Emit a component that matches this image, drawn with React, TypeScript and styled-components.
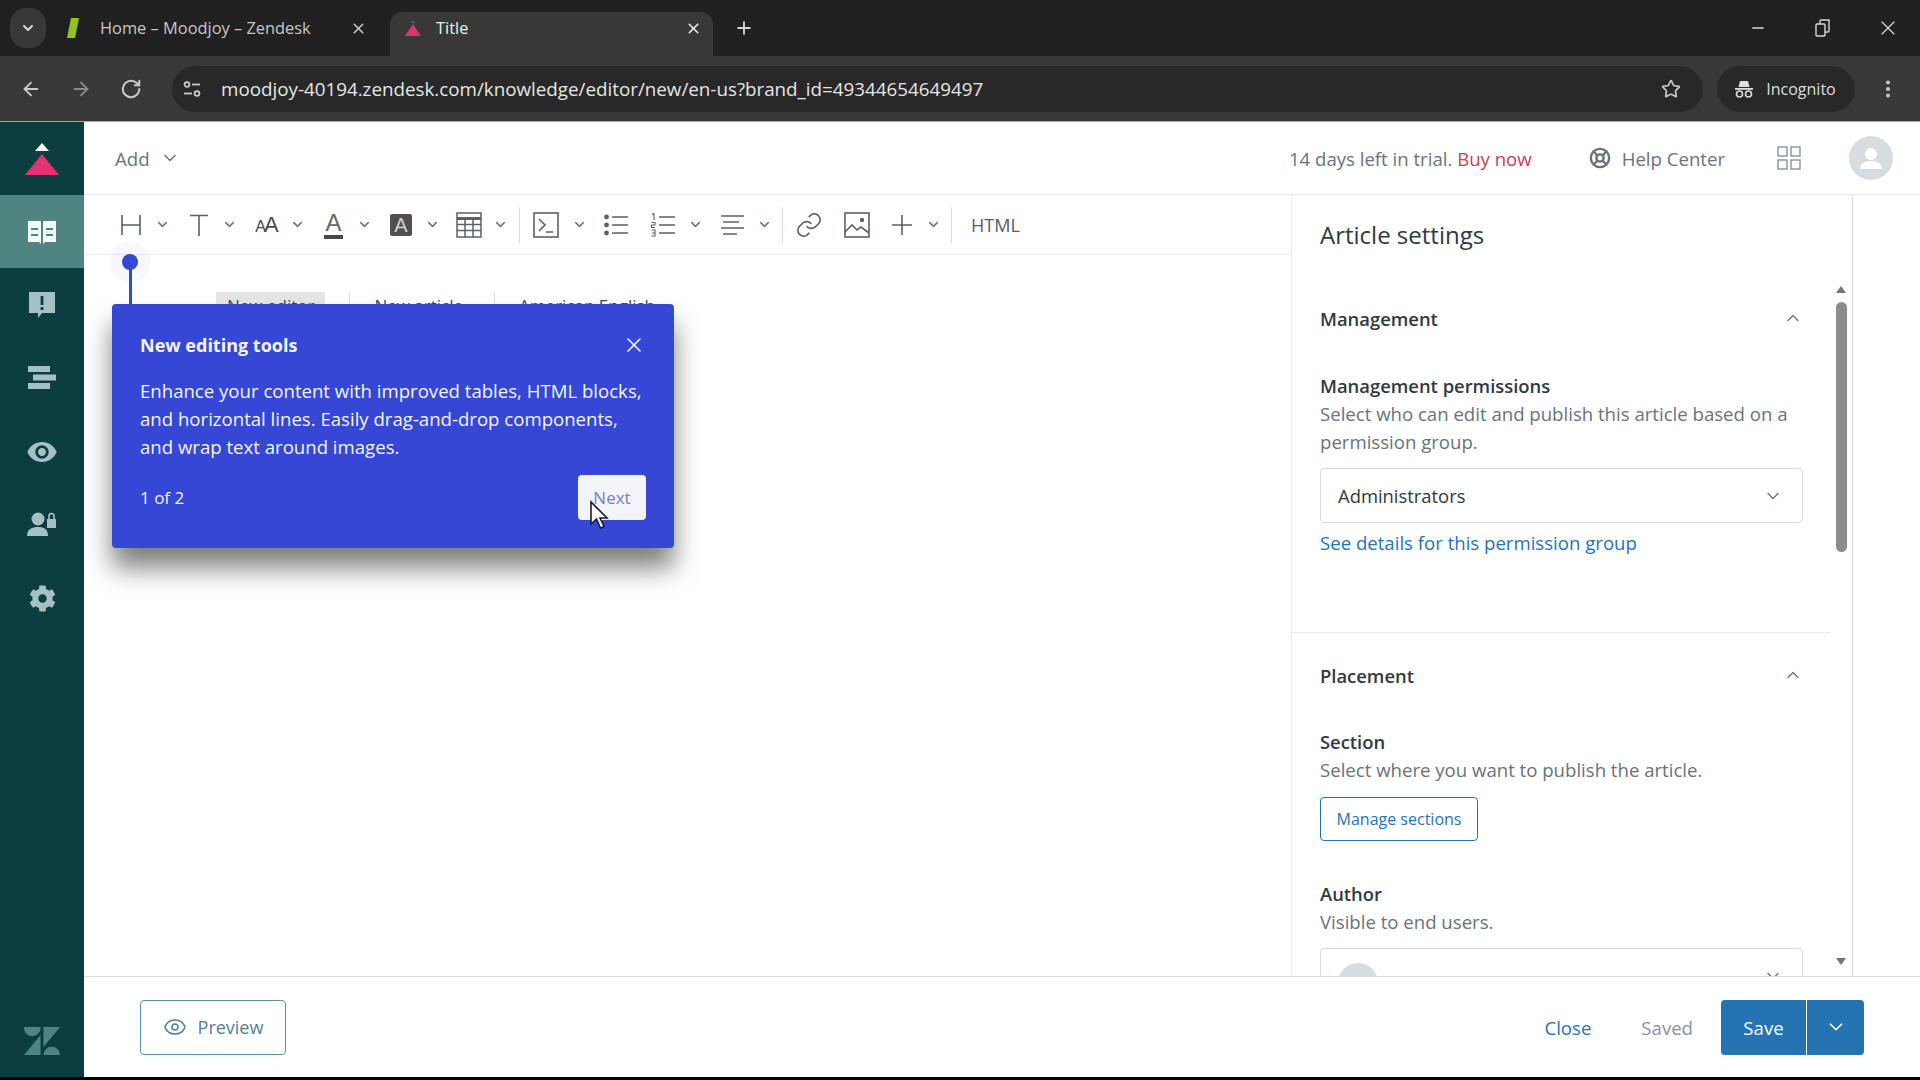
import React from "react";
import styled, { createGlobalStyle } from "styled-components";
import {
  ArrowLeft,
  ArrowRight,
  ChevronDown,
  ChevronUp,
  Eye,
  LifeBuoy,
  Minus,
  MoreVertical,
  Plus,
  RotateCw,
  Star,
  X,
} from "lucide-react";
import { FaCog } from "react-icons/fa";
import { MdVisibility } from "react-icons/md";

const GlobalStyle = createGlobalStyle`
  html, body {
    margin: 0;
    padding: 0;
    background: #000;
    font-family: "Open Sans", "Noto Sans", sans-serif;
  }
  * {
    box-sizing: border-box;
  }
`;

const Screen = styled.div`
  width: 1920px;
  height: 1080px;
  overflow: hidden;
  display: flex;
  flex-direction: column;
  background: #000;
`;

/* browser chrome */

const TabStrip = styled.div`
  height: 56px;
  display: flex;
  align-items: flex-end;
  padding-left: 10px;
  background: #202020;
  color: #d8d8d8;
`;

const TabMenu = styled.div`
  width: 36px;
  height: 40px;
  margin-bottom: 8px;
  border-radius: 16px;
  background: #383838;
  display: flex;
  align-items: center;
  justify-content: center;
`;

const Tab = styled.div<{ $active?: boolean }>`
  width: ${(p) => (p.$active ? "323px" : "344px")};
  height: 44px;
  display: flex;
  align-items: center;
  gap: ${(p) => (p.$active ? "14px" : "20px")};
  padding: ${(p) => (p.$active ? "0 11px 12px 14px" : "0 23px 12px 20px")};
  border-radius: 12px 12px 0 0;
  background: ${(p) => (p.$active ? "#383838" : "transparent")};
  color: ${(p) => (p.$active ? "#eee" : "#c8c8c8")};
`;

const TabTitle = styled.span`
  flex: 1;
  font-size: 16.4px;
  line-height: 24px;
  white-space: nowrap;
`;

const NewTab = styled.div`
  margin: 0 0 16px 21px;
  height: 24px;
  display: flex;
  align-items: center;
`;

const WindowControls = styled.div`
  margin-left: auto;
  align-self: flex-start;
  display: flex;
`;

const WindowButton = styled.div`
  width: 65px;
  height: 56px;
  display: flex;
  align-items: center;
  justify-content: center;
`;

const NavBar = styled.div`
  height: 66px;
  display: flex;
  align-items: center;
  gap: 14px;
  padding: 0 21px 0 20px;
  background: #383838;
  border-bottom: 1px solid #a8a8a8;
  color: #c9c9c9;
`;

const NavIcons = styled.div`
  display: flex;
  align-items: center;
  gap: 28px;
  margin-right: 16px;
`;

const AddressPill = styled.div`
  width: 1535px;
  height: 46px;
  display: flex;
  align-items: center;
  padding: 0 22px 0 11px;
  border-radius: 23px;
  background: #282828;
`;

const SiteChip = styled.div`
  width: 18px;
  margin-right: 20px;
  display: flex;
  justify-content: center;
`;

const Url = styled.span`
  flex: 1;
  font-size: 18.8px;
  color: #e6e6e6;
  white-space: nowrap;
`;

const IncognitoPill = styled.div`
  width: 138px;
  height: 46px;
  display: flex;
  align-items: center;
  gap: 12px;
  padding-left: 17px;
  border-radius: 23px;
  background: #282828;
  font-size: 16px;
  color: #dedede;
`;

const MoreDots = styled.div`
  margin-left: 8px;
  display: flex;
`;

/* app */

const AppBody = styled.div`
  flex: 1;
  min-height: 0;
  display: flex;
  background: #fff;
`;

const Sidebar = styled.nav`
  width: 84px;
  display: flex;
  flex-direction: column;
  background: #0c3e40;
  color: #a6c1c3;
`;

const SideLogo = styled.div`
  height: 73px;
  display: flex;
  align-items: center;
  justify-content: center;
`;

const SideItem = styled.div<{ $active?: boolean }>`
  height: 73.3px;
  display: flex;
  align-items: center;
  justify-content: center;
  background: ${(p) => (p.$active ? "#4f8480" : "transparent")};
  color: ${(p) => (p.$active ? "#f2fafa" : "inherit")};
`;

const SideFooter = styled.div`
  margin-top: auto;
  padding-bottom: 22px;
  display: flex;
  justify-content: center;
  color: #4f8480;
`;

const Main = styled.div`
  flex: 1;
  min-width: 0;
  display: flex;
  flex-direction: column;
`;

const Header = styled.header`
  height: 73px;
  display: flex;
  align-items: center;
  padding: 0 27px 0 31px;
  border-bottom: 1px solid #e9ebed;
  color: #68737d;
  font-size: 18.6px;
`;

const AddMenu = styled.div`
  display: flex;
  align-items: center;
  gap: 10px;
`;

const Trial = styled.div`
  margin-left: auto;
`;

const BuyNow = styled.span`
  color: #c8405a;
`;

const HelpCenter = styled.div`
  margin-left: 57px;
  display: flex;
  align-items: center;
  gap: 11px;
`;

const AppsButton = styled.div`
  margin-left: 52px;
  display: flex;
  color: #87929d;
`;

const UserAvatar = styled.div`
  margin-left: 48px;
  width: 44px;
  height: 44px;
  border-radius: 50%;
  background: #d8dcde;
  color: #fff;
  overflow: hidden;
  display: flex;
`;

const Content = styled.div`
  flex: 1;
  min-height: 0;
  display: flex;
`;

const Editor = styled.section`
  position: relative;
  width: 1207px;
  display: flex;
  flex-direction: column;
`;

const EditorToolbar = styled.div`
  height: 60px;
  display: flex;
  align-items: center;
  padding-left: 29px;
  border-bottom: 1px solid #e9ebed;
  color: #5a6168;
`;

const ToolGroup = styled.div<{ $after?: number; $gap?: number }>`
  display: flex;
  align-items: center;
  gap: ${(p) => p.$gap ?? 0}px;
  margin-right: ${(p) => p.$after ?? 5.5}px;
`;

const ToolIcon = styled.div<{ $wide?: number }>`
  width: ${(p) => p.$wide ?? 36}px;
  height: 36px;
  display: flex;
  align-items: center;
  justify-content: center;
`;

const ToolCaret = styled.div`
  width: 26px;
  display: flex;
  justify-content: center;
  color: #68737d;
`;

const ToolDivider = styled.div`
  width: 1px;
  height: 36px;
  margin: 0 8px 0 5px;
  background: #d8dcde;
`;

const SmallCaps = styled.span`
  font-family: "Liberation Sans", sans-serif;
  font-size: 22px;
  letter-spacing: -2px;
  line-height: 1;
  color: #4a4a4a;
  & > small {
    font-size: 16px;
  }
`;

const ColorLetter = styled.span`
  font-family: "Liberation Sans", sans-serif;
  font-size: 24px;
  line-height: 24px;
  font-weight: 400;
  color: #686868;
  border-bottom: 4px solid #4a4a4a;
  padding: 0 1px;
`;

const FillLetter = styled.span`
  width: 22px;
  height: 22px;
  border-radius: 2px;
  background: #505050;
  color: #d0d0d0;
  font-family: "Liberation Sans", sans-serif;
  font-size: 20px;
  line-height: 22px;
  text-align: center;
`;

const HtmlButton = styled.div`
  margin-left: 11px;
  font-size: 18px;
  color: #555c63;
`;

const MetaRow = styled.div`
  margin: 37px 0 0 132px;
  display: flex;
  align-items: center;
  height: 24px;
  font-size: 17px;
  line-height: 20px;
  color: #3e4a52;
`;

const MetaItem = styled.div<{ $filled?: boolean }>`
  height: 24px;
  padding: ${(p) => (p.$filled ? "4px 11px 0" : "4px 7px 0 0")};
  background: ${(p) => (p.$filled ? "#e6e6e6" : "transparent")};
  white-space: nowrap;
`;

const MetaDivider = styled.div`
  width: 1px;
  height: 24px;
  margin: 0 24px;
  background: #d8dcde;
`;

/* tour popover, sits over the editor */

const Beacon = styled.div`
  position: absolute;
  left: 38px;
  top: 59px;
  width: 16px;
  height: 16px;
  border-radius: 50%;
  background: #3547d4;
  box-shadow: 0 0 0 12px rgba(53, 71, 212, 0.04);
  &::after {
    content: "";
    position: absolute;
    left: 7px;
    top: 14px;
    width: 2.5px;
    height: 40px;
    background: #3547d4;
  }
`;

const Popover = styled.div`
  position: absolute;
  left: 28px;
  top: 109px;
  width: 562px;
  height: 244px;
  padding: 27px 28px 0;
  border-radius: 4px;
  background: #3547d4;
  color: #f4f5fc;
  box-shadow: 0 20px 26px rgba(0, 0, 0, 0.5);
`;

const PopoverHead = styled.div`
  display: flex;
  align-items: center;
  justify-content: space-between;
  height: 28px;
  font-size: 18px;
  font-weight: 700;
`;

const PopoverText = styled.p`
  margin: 18px 0 0;
  font-size: 18.6px;
  line-height: 28px;
  white-space: nowrap;
`;

const PopoverFoot = styled.div`
  margin-top: 14px;
  display: flex;
  align-items: center;
  justify-content: space-between;
  font-size: 17px;
`;

const NextButton = styled.div`
  width: 68px;
  height: 45px;
  border-radius: 4px;
  background: #f3f4f8;
  color: #7c7fc0;
  font-size: 17px;
  display: flex;
  align-items: center;
  justify-content: center;
`;

const Cursor = styled.svg`
  position: absolute;
  left: 505px;
  top: 305px;
`;

/* settings panel */

const Panel = styled.aside`
  width: 562px;
  display: flex;
  flex-direction: column;
  border-left: 1px solid #e9ebed;
  border-right: 1px solid #d8dcde;
  overflow: hidden;
`;

const PanelTitle = styled.h2`
  margin: 0;
  padding: 24px 0 25px 28px;
  font-size: 24px;
  line-height: 32px;
  font-weight: 400;
  color: #2f3941;
`;

const PanelBody = styled.div`
  flex: 1;
  min-height: 0;
  display: flex;
`;

const PanelScroll = styled.div`
  width: 540px;
  overflow: hidden;
`;

const Settings = styled.div<{ $last?: boolean }>`
  padding: ${(p) => (p.$last ? "30px 0 0 28px" : "30px 0 75px 28px")};
  border-bottom: ${(p) => (p.$last ? "none" : "1px solid #e9ebed")};
`;

const SettingsHead = styled.div`
  width: 483px;
  height: 24px;
  display: flex;
  align-items: center;
  justify-content: space-between;
  font-size: 18.4px;
  font-weight: 600;
  color: #2f3941;
`;

const FieldLabel = styled.div<{ $gap?: number }>`
  margin-top: ${(p) => p.$gap ?? 41}px;
  font-size: 18.4px;
  line-height: 28px;
  font-weight: 600;
  color: #2f3941;
`;

const FieldHint = styled.div`
  width: 483px;
  font-size: 18.6px;
  line-height: 28px;
  color: #68737d;
`;

const SelectBox = styled.div`
  width: 483px;
  height: 55px;
  margin-top: 12px;
  padding: 0 19px 0 17px;
  display: flex;
  align-items: center;
  justify-content: space-between;
  border: 1px solid #d8dcde;
  border-radius: 4px;
  font-size: 18.4px;
  color: #2f3941;
`;

const SelectAvatar = styled.div`
  width: 40px;
  height: 40px;
  margin-top: 15px;
  border-radius: 50%;
  background: #d8dcde;
`;

const FieldLink = styled.div`
  margin-top: 6px;
  font-size: 18.6px;
  line-height: 28px;
  color: #1f73b7;
`;

const OutlineButton = styled.div`
  width: 158px;
  height: 44px;
  margin-top: 13px;
  display: flex;
  align-items: center;
  justify-content: center;
  border: 1.5px solid #1f73b7;
  border-radius: 4px;
  font-size: 16px;
  color: #1f73b7;
`;

const Scrollbar = styled.div`
  width: 22px;
  display: flex;
  flex-direction: column;
  align-items: center;
  padding-top: 10px;
`;

const ScrollThumb = styled.div`
  width: 11px;
  height: 250px;
  margin-top: 9px;
  border-radius: 6px;
  background: #8c8c8c;
`;

const ScrollArrow = styled.div<{ $down?: boolean }>`
  width: 0;
  height: 0;
  border-left: 5px solid transparent;
  border-right: 5px solid transparent;
  border-bottom: ${(p) => (p.$down ? "none" : "7px solid #757575")};
  border-top: ${(p) => (p.$down ? "7px solid #757575" : "none")};
  margin-top: ${(p) => (p.$down ? "406px" : "0")};
`;

/* footer */

const Footer = styled.footer`
  height: 101px;
  display: flex;
  align-items: center;
  padding: 0 56px;
  border-top: 1px solid #dfe2e5;
`;

const PreviewButton = styled.div`
  width: 146px;
  height: 55px;
  display: flex;
  align-items: center;
  justify-content: center;
  gap: 11px;
  border: 1.5px solid #5f8fa8;
  border-radius: 4px;
  font-size: 18px;
  color: #4f7f9a;
`;

const FooterActions = styled.div`
  margin-left: auto;
  display: flex;
  align-items: center;
  font-size: 18.6px;
`;

const CloseLink = styled.span`
  color: #1f73b7;
`;

const SavedLabel = styled.span`
  margin: 0 28px 0 50px;
  color: #87929d;
`;

const SplitButton = styled.div`
  height: 55px;
  display: flex;
  color: #fff;
`;

const SaveButton = styled.div`
  width: 85px;
  display: flex;
  align-items: center;
  justify-content: center;
  background: #2673b3;
  border-radius: 4px 0 0 4px;
`;

const SaveCaret = styled.div`
  width: 57px;
  margin-left: 1px;
  display: flex;
  align-items: center;
  justify-content: center;
  background: #2673b3;
  border-radius: 0 4px 4px 0;
`;

const BottomEdge = styled.div`
  height: 3px;
  background: #000;
`;

const Caret = () => <ChevronDown size={15} strokeWidth={2.4} />;

const Line = (props: React.SVGProps<SVGSVGElement>) => (
  <svg width="26" height="26" viewBox="0 0 26 26" fill="none" stroke="currentColor" strokeWidth="1.6" {...props} />
);

const App: React.FC = () => {
  return (
    <Screen>
      <GlobalStyle />
      <TabStrip>
        <TabMenu>
          <ChevronDown size={16} strokeWidth={3} />
        </TabMenu>
        <Tab>
          <svg width="14" height="22" viewBox="0 0 14 22">
            <path d="M5 1 L13 1 L9 21 L1 21 Z" fill="#8fc31f" />
          </svg>
          <TabTitle>Home – Moodjoy – Zendesk</TabTitle>
          <X size={17} strokeWidth={2.2} />
        </Tab>
        <Tab $active>
          <svg width="18" height="20" viewBox="0 0 18 20">
            <path d="M9 2 L11 5 L7 5 Z" fill="#2f7a70" />
            <path d="M9 6 L17 18 L1 18 Z" fill="#e0336f" />
          </svg>
          <TabTitle>Title</TabTitle>
          <X size={17} strokeWidth={2.2} />
        </Tab>
        <NewTab>
          <Plus size={20} strokeWidth={2.2} />
        </NewTab>
        <WindowControls>
          <WindowButton>
            <Minus size={18} strokeWidth={1.8} />
          </WindowButton>
          <WindowButton>
            <svg width="16" height="18" viewBox="0 0 16 18" fill="none" stroke="currentColor" strokeWidth="1.4">
              <rect x="1" y="5" width="9" height="12" rx="1" />
              <path d="M5 5 V2 a1 1 0 0 1 1 -1 h8 v11 a1 1 0 0 1 -1 1 h-3" />
            </svg>
          </WindowButton>
          <WindowButton>
            <X size={24} strokeWidth={1.3} />
          </WindowButton>
        </WindowControls>
      </TabStrip>

      <NavBar>
        <NavIcons>
          <ArrowLeft size={22} strokeWidth={2} />
          <ArrowRight size={22} strokeWidth={2} color="#8a8a8a" />
          <RotateCw size={22} strokeWidth={2.2} />
        </NavIcons>
        <AddressPill>
          <SiteChip>
            <svg width="18" height="18" viewBox="0 0 18 18" fill="none" stroke="currentColor" strokeWidth="1.8">
              <circle cx="4" cy="4.5" r="2.4" />
              <path d="M9 4.5 H17" />
              <path d="M1 13.5 H9" />
              <circle cx="14" cy="13.5" r="2.4" />
            </svg>
          </SiteChip>
          <Url>moodjoy-40194.zendesk.com/knowledge/editor/new/en-us?brand_id=49344654649497</Url>
          <Star size={20} strokeWidth={2} />
        </AddressPill>
        <IncognitoPill>
          <svg width="20" height="20" viewBox="0 0 20 20" fill="currentColor">
            <path d="M6 2 h8 l1.5 6 h-11 Z" />
            <rect x="1" y="9" width="18" height="1.8" />
            <circle cx="5.5" cy="15" r="3" fill="none" stroke="currentColor" strokeWidth="1.6" />
            <circle cx="14.5" cy="15" r="3" fill="none" stroke="currentColor" strokeWidth="1.6" />
          </svg>
          Incognito
        </IncognitoPill>
        <MoreDots>
          <MoreVertical size={22} strokeWidth={2.4} />
        </MoreDots>
      </NavBar>

      <AppBody>
        <Sidebar>
          <SideLogo>
            <svg width="36" height="32" viewBox="0 0 36 32">
              <path d="M18 0 L25 8 L11 8 Z" fill="#fff" />
              <path d="M18 11 L35 32 L1 32 Z" fill="#e0336f" />
            </svg>
          </SideLogo>
          <SideItem $active>
            <svg width="30" height="30" viewBox="0 0 30 30" fill="currentColor">
              <path d="M1 4 h12 a1 1 0 0 1 1 1 v22 l-2 -2 H1 Z M29 4 h-12 a1 1 0 0 0 -1 1 v22 l2 -2 h11 Z" />
              <path d="M4 11 h7 v2 H4 Z M4 17 h7 v2 H4 Z M19 11 h7 v2 h-7 Z M19 17 h7 v2 h-7 Z" fill="#4f8480" />
            </svg>
          </SideItem>
          <SideItem>
            <svg width="28" height="28" viewBox="0 0 28 28" fill="currentColor">
              <path d="M1 1 h26 v21 H14 l-4 5 v-5 H1 Z" />
              <path d="M12.6 5 h2.8 v9 h-2.8 Z M12.6 16 h2.8 v3 h-2.8 Z" fill="#0c3e40" />
            </svg>
          </SideItem>
          <SideItem>
            <svg width="28" height="24" viewBox="0 0 28 24" fill="currentColor">
              <rect x="0" y="0" width="22" height="6" />
              <rect x="5" y="8.5" width="23" height="6" />
              <rect x="0" y="17" width="22" height="6" />
            </svg>
          </SideItem>
          <SideItem>
            <MdVisibility size={32} />
          </SideItem>
          <SideItem>
            <svg width="30" height="28" viewBox="0 0 30 28" fill="currentColor">
              <circle cx="11" cy="8" r="6.5" />
              <path d="M0 25 c0 -7 5 -9 11 -9 s10 2 10 9 Z" />
              <path d="M20 8 h9 v9 h-9 Z" />
              <path d="M22 8 v-3 a2.5 2.5 0 0 1 5 0 v3" fill="none" stroke="currentColor" strokeWidth="1.6" />
            </svg>
          </SideItem>
          <SideItem>
            <FaCog size={27} />
          </SideItem>
          <SideFooter>
            <svg width="36" height="28" viewBox="0 0 36 28" fill="currentColor">
              <path d="M0 0 H16.5 V1 A8.2 8.2 0 0 1 0 1 Z" />
              <path d="M16.5 8 V28 H0 Z" />
              <path d="M19.5 0 H36 L19.5 20 Z" />
              <path d="M19.5 28 A8.2 8.2 0 0 1 36 28 Z" />
            </svg>
          </SideFooter>
        </Sidebar>

        <Main>
          <Header>
            <AddMenu>
              Add
              <ChevronDown size={20} strokeWidth={1.8} />
            </AddMenu>
            <Trial>
              14 days left in trial. <BuyNow>Buy now</BuyNow>
            </Trial>
            <HelpCenter>
              <LifeBuoy size={22} strokeWidth={2.6} />
              Help Center
            </HelpCenter>
            <AppsButton>
              <svg width="24" height="24" viewBox="0 0 24 24" fill="none" stroke="currentColor" strokeWidth="1.4">
                <rect x="1" y="1" width="9" height="9" />
                <rect x="14" y="1" width="9" height="9" />
                <rect x="1" y="14" width="9" height="9" />
                <rect x="14" y="14" width="9" height="9" />
              </svg>
            </AppsButton>
            <UserAvatar>
              <svg width="44" height="44" viewBox="0 0 44 44" fill="currentColor">
                <circle cx="22" cy="18" r="6" />
                <path d="M11 33 c0 -6 5 -8 11 -8 s11 2 11 8 Z" />
              </svg>
            </UserAvatar>
          </Header>

          <Content>
            <Editor>
              <EditorToolbar>
                <ToolGroup>
                  <ToolIcon>
                    <Line>
                      <path d="M4 3 V23 M22 3 V23 M4 13 H22" />
                    </Line>
                  </ToolIcon>
                  <ToolCaret><Caret /></ToolCaret>
                </ToolGroup>
                <ToolGroup>
                  <ToolIcon>
                    <Line>
                      <path d="M4 3.5 H22 M13 3.5 V24" />
                    </Line>
                  </ToolIcon>
                  <ToolCaret><Caret /></ToolCaret>
                </ToolGroup>
                <ToolGroup>
                  <ToolIcon>
                    <SmallCaps><small>A</small>A</SmallCaps>
                  </ToolIcon>
                  <ToolCaret><Caret /></ToolCaret>
                </ToolGroup>
                <ToolGroup>
                  <ToolIcon>
                    <ColorLetter>A</ColorLetter>
                  </ToolIcon>
                  <ToolCaret><Caret /></ToolCaret>
                </ToolGroup>
                <ToolGroup>
                  <ToolIcon>
                    <FillLetter>A</FillLetter>
                  </ToolIcon>
                  <ToolCaret><Caret /></ToolCaret>
                </ToolGroup>
                <ToolGroup $after={0} $gap={1}>
                  <ToolIcon>
                    <svg width="26" height="26" viewBox="0 0 26 26" fill="none" stroke="currentColor" strokeWidth="1.5">
                      <rect x="1" y="1" width="24" height="24" />
                      <path d="M1 6.5 H25" strokeWidth="3" />
                      <path d="M1 12.5 H25 M1 18.5 H25 M9 6 V25 M17 6 V25" />
                    </svg>
                  </ToolIcon>
                  <ToolCaret><Caret /></ToolCaret>
                </ToolGroup>
                <ToolDivider />
                <ToolGroup $after={6} $gap={2.5}>
                  <ToolIcon>
                    <Line>
                      <rect x="1" y="1" width="24" height="24" />
                      <path d="M6 7 L12 13 L6 19 M13 20 H20" />
                    </Line>
                  </ToolIcon>
                  <ToolCaret><Caret /></ToolCaret>
                </ToolGroup>
                <ToolGroup $after={10}>
                  <ToolIcon>
                    <Line>
                      <path d="M9 5 H25 M9 13 H25 M9 21 H25" />
                      <circle cx="3.5" cy="5" r="2.4" fill="currentColor" stroke="none" />
                      <circle cx="3.5" cy="13" r="2.4" fill="currentColor" stroke="none" />
                      <circle cx="3.5" cy="21" r="2.4" fill="currentColor" stroke="none" />
                    </Line>
                  </ToolIcon>
                </ToolGroup>
                <ToolGroup $after={6}>
                  <ToolIcon $wide={38}>
                    <Line>
                      <path d="M9 5 H25 M9 13 H25 M9 21 H25" />
                      <path d="M2 2.5 L4 1.5 V8 M1.5 10.5 H5 V13 H1.5 V15.5 H5 M1.5 18 H5 V24 H1.5 M2 21 H5" strokeWidth="1.1" />
                    </Line>
                  </ToolIcon>
                  <ToolCaret><Caret /></ToolCaret>
                </ToolGroup>
                <ToolGroup $after={0} $gap={1}>
                  <ToolIcon>
                    <Line>
                      <path d="M2 4 H25 M4 10 H20 M2 16 H25 M4 22 H18" />
                    </Line>
                  </ToolIcon>
                  <ToolCaret><Caret /></ToolCaret>
                </ToolGroup>
                <ToolDivider />
                <ToolGroup $after={12}>
                  <ToolIcon>
                    <svg width="28" height="28" viewBox="0 0 24 24" fill="none" stroke="currentColor" strokeWidth="1.5">
                      <path d="M10 13 a5 5 0 0 0 7.5 .5 l3 -3 a5 5 0 0 0 -7 -7 l-1.7 1.7" />
                      <path d="M14 11 a5 5 0 0 0 -7.5 -.5 l-3 3 a5 5 0 0 0 7 7 l1.7 -1.7" />
                    </svg>
                  </ToolIcon>
                </ToolGroup>
                <ToolGroup $after={9}>
                  <ToolIcon>
                    <Line>
                      <rect x="1" y="1" width="24" height="24" />
                      <path d="M1 20 L8 13 L13 18 L17 15 L25 21" />
                      <circle cx="18" cy="8" r="2.2" fill="currentColor" stroke="none" />
                    </Line>
                  </ToolIcon>
                </ToolGroup>
                <ToolGroup $after={0}>
                  <ToolIcon>
                    <Line>
                      <path d="M13 3 V23 M3 13 H23" />
                    </Line>
                  </ToolIcon>
                  <ToolCaret><Caret /></ToolCaret>
                </ToolGroup>
                <ToolDivider />
                <HtmlButton>HTML</HtmlButton>
              </EditorToolbar>

              <MetaRow>
                <MetaItem $filled>New editor</MetaItem>
                <MetaDivider />
                <MetaItem>New article</MetaItem>
                <MetaDivider />
                <MetaItem>American English</MetaItem>
              </MetaRow>

              <Beacon />
              <Popover>
                <PopoverHead>
                  New editing tools
                  <X size={24} strokeWidth={1.6} />
                </PopoverHead>
                <PopoverText>
                  Enhance your content with improved tables, HTML blocks,
                  <br />
                  and horizontal lines. Easily drag-and-drop components,
                  <br />
                  and wrap text around images.
                </PopoverText>
                <PopoverFoot>
                  1 of 2
                  <NextButton>Next</NextButton>
                </PopoverFoot>
              </Popover>
              <Cursor width="20" height="30" viewBox="0 0 20 30">
                <path d="M2 2 V24 L7.5 19 L11.5 28 L15 26.5 L11 18 H18 Z" fill="#fff" stroke="#1a1a40" strokeWidth="1.6" />
              </Cursor>
            </Editor>

            <Panel>
              <PanelTitle>Article settings</PanelTitle>
              <PanelBody>
                <PanelScroll>
                  <Settings>
                    <SettingsHead>
                      Management
                      <ChevronUp size={20} strokeWidth={1.6} color="#68737d" />
                    </SettingsHead>
                    <FieldLabel $gap={42}>Management permissions</FieldLabel>
                    <FieldHint>Select who can edit and publish this article based on a permission group.</FieldHint>
                    <SelectBox>
                      Administrators
                      <ChevronDown size={20} strokeWidth={1.6} color="#68737d" />
                    </SelectBox>
                    <FieldLink>See details for this permission group</FieldLink>
                  </Settings>
                  <Settings $last>
                    <SettingsHead>
                      Placement
                      <ChevronUp size={20} strokeWidth={1.6} color="#68737d" />
                    </SettingsHead>
                    <FieldLabel>Section</FieldLabel>
                    <FieldHint>Select where you want to publish the article.</FieldHint>
                    <OutlineButton>Manage sections</OutlineButton>
                    <FieldLabel $gap={39}>Author</FieldLabel>
                    <FieldHint>Visible to end users.</FieldHint>
                    <SelectBox>
                      <SelectAvatar />
                      <ChevronDown size={20} strokeWidth={1.6} color="#68737d" />
                    </SelectBox>
                  </Settings>
                </PanelScroll>
                <Scrollbar>
                  <ScrollArrow />
                  <ScrollThumb />
                  <ScrollArrow $down />
                </Scrollbar>
              </PanelBody>
            </Panel>
          </Content>

          <Footer>
            <PreviewButton>
              <Eye size={24} strokeWidth={1.5} />
              Preview
            </PreviewButton>
            <FooterActions>
              <CloseLink>Close</CloseLink>
              <SavedLabel>Saved</SavedLabel>
              <SplitButton>
                <SaveButton>Save</SaveButton>
                <SaveCaret>
                  <ChevronDown size={22} strokeWidth={1.8} />
                </SaveCaret>
              </SplitButton>
            </FooterActions>
          </Footer>
        </Main>
      </AppBody>
      <BottomEdge />
    </Screen>
  );
};

export default App;
